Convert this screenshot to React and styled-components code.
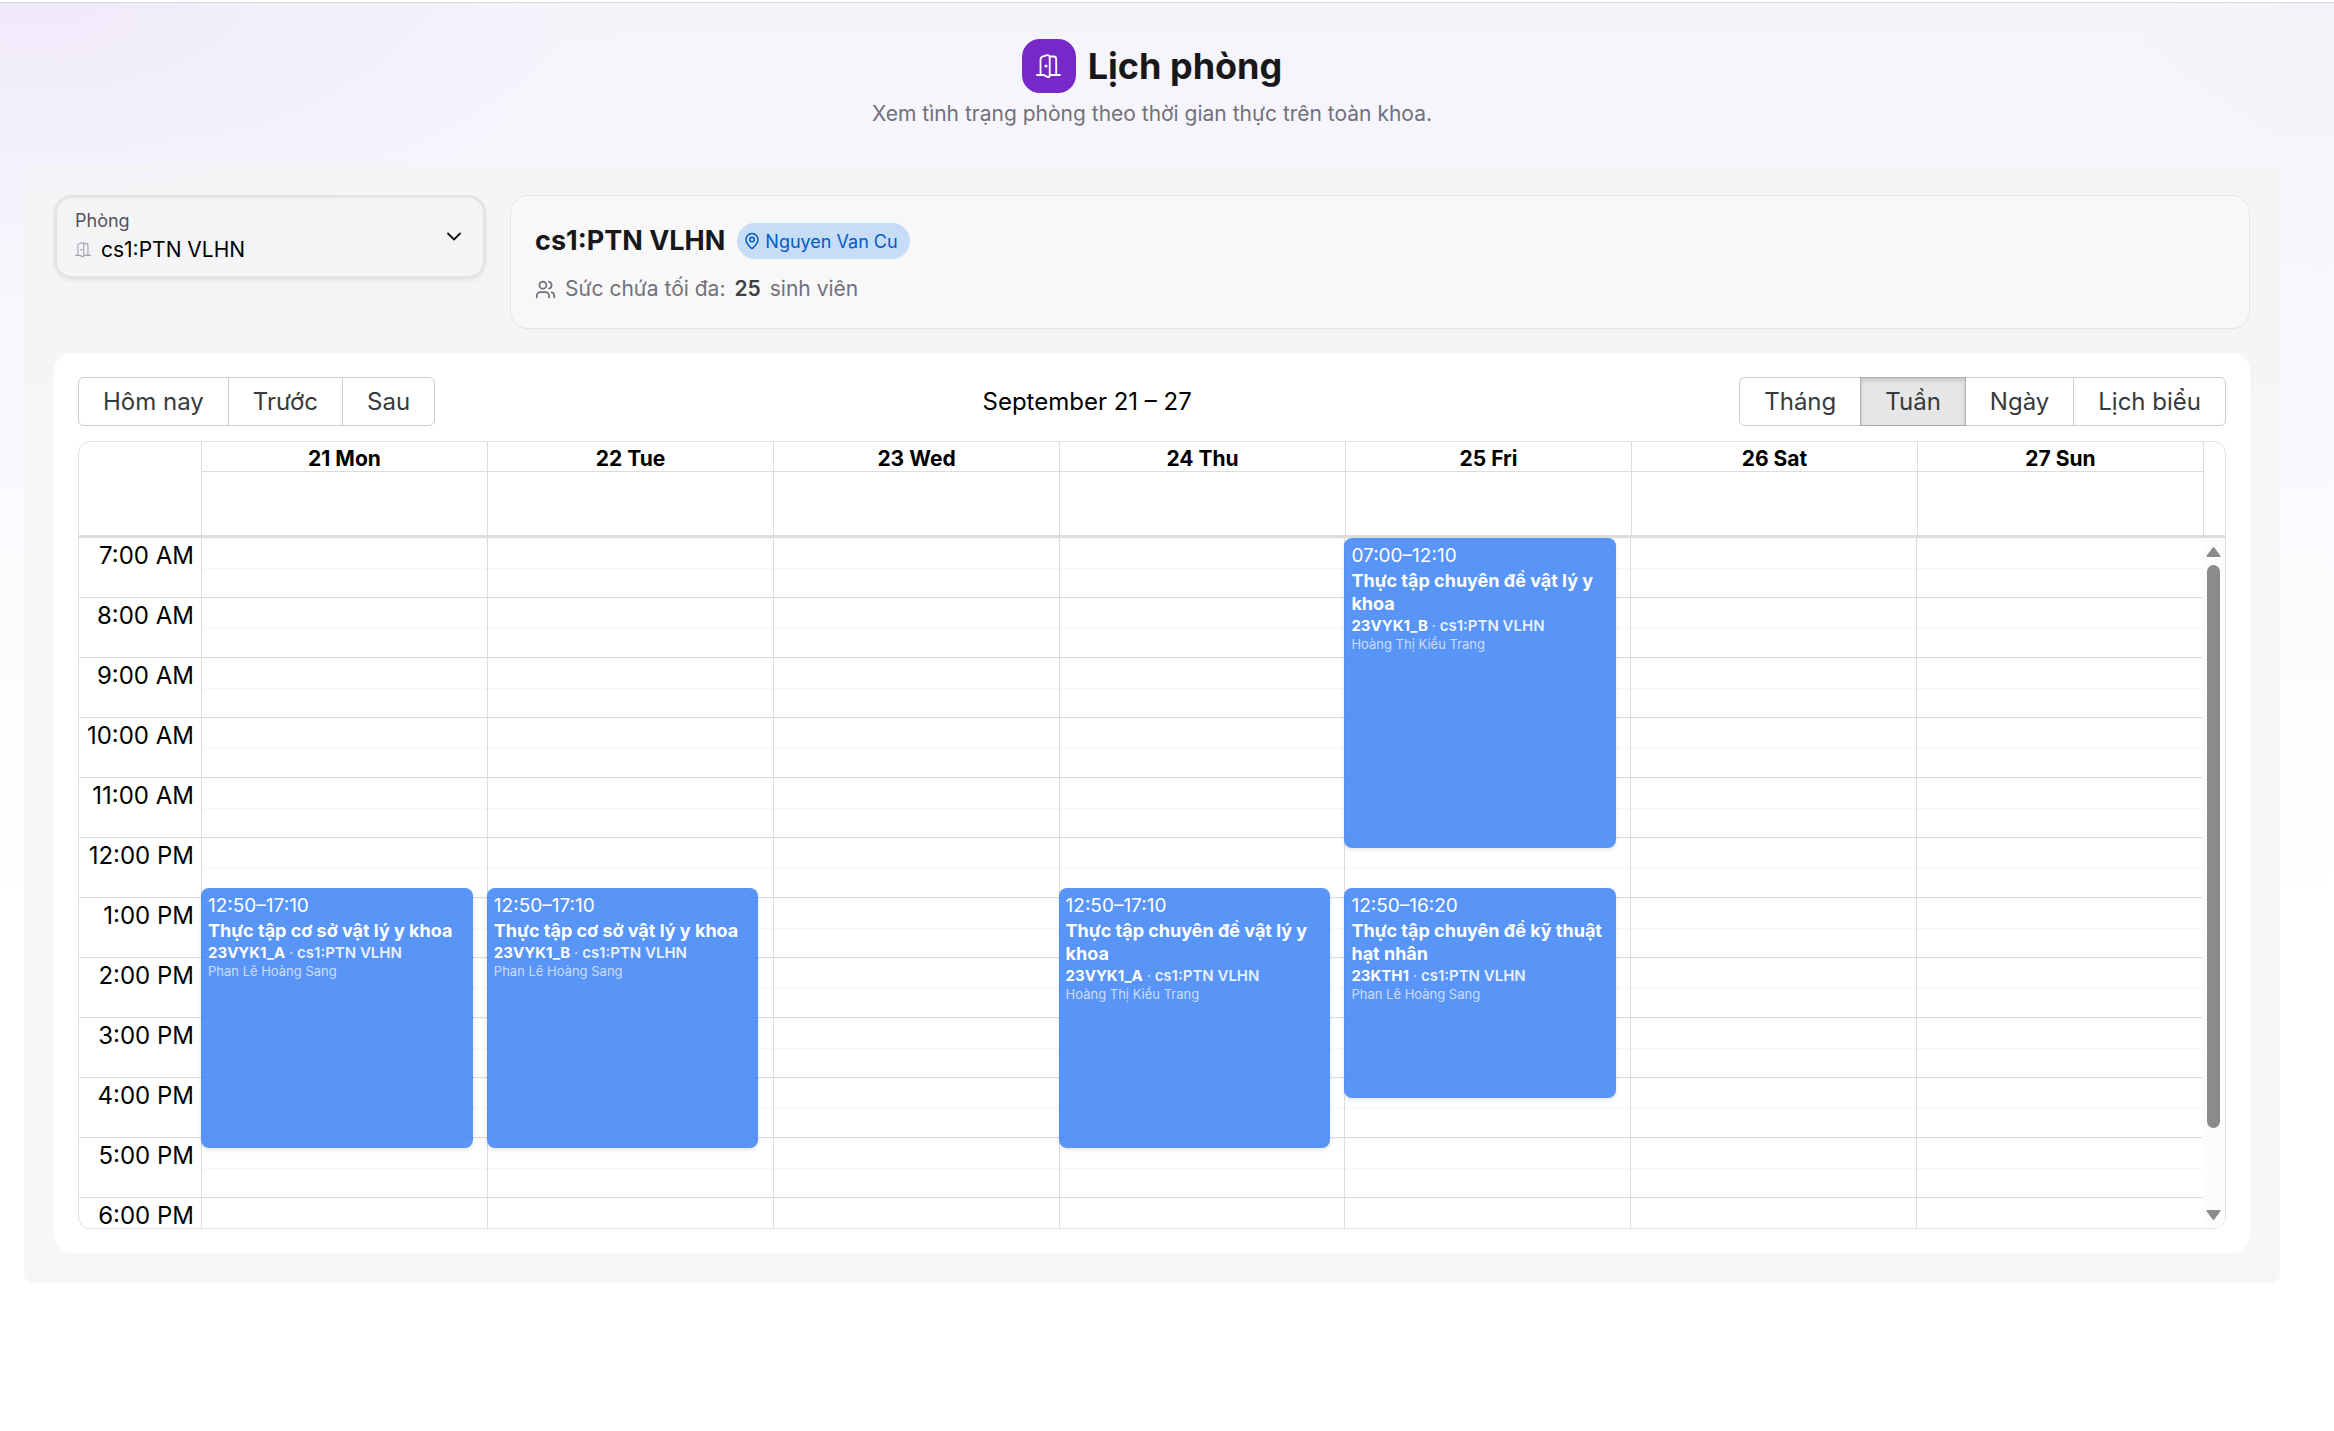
import React, { useState } from "react";
import styled, { createGlobalStyle, css } from "styled-components";
import { MapPin, Users } from "lucide-react";

const HOUR_HEIGHT = 60;
const FIRST_HOUR = 7;

const GlobalStyle = createGlobalStyle`
  *, *::before, *::after { box-sizing: border-box; }
  body {
    margin: 0;
    background: #fff;
    color: #000;
    font-family: Inter, "Noto Sans", sans-serif;
    font-size: 24px;
  }
  button, select { font: inherit; color: inherit; }
`;

const Page = styled.div`
  min-height: 100vh;
  padding: 2px 54px 48px 24px;
  background:
    linear-gradient(#fff 2px, #d9d7de 2px, #d9d7de 3px, transparent 3px),
    radial-gradient(ellipse 600px 320px at 40px 0, rgba(214, 190, 245, 0.2), rgba(214, 200, 248, 0.1) 50%, transparent),
    radial-gradient(ellipse 200px 300px at 100% 0, rgba(225, 230, 240, 0.16), transparent),
    linear-gradient(#f6f4fb 0, #f8f6fd 200px, #fafafe 480px, #fff 900px);
`;

const Header = styled.header`
  display: flex;
  flex-direction: column;
  align-items: center;
  gap: 6px;
  padding: 37px 0 36px;
`;

const HeaderRow = styled.div`
  display: flex;
  align-items: center;
  gap: 12px;
`;

const IconTile = styled.span`
  display: flex;
  align-items: center;
  justify-content: center;
  width: 54px;
  height: 54px;
  border-radius: 18px;
  background: #7828c8;
  color: #fff;
`;

const PageTitle = styled.h1`
  margin: 0;
  font-size: 36px;
  line-height: 54px;
  font-weight: 700;
  color: #18181b;
`;

const Subtitle = styled.p`
  margin: 0;
  font-size: 21px;
  line-height: 30px;
  color: #71717a;
`;

const Panel = styled.main`
  display: flex;
  flex-direction: column;
  gap: 24px;
  padding: 30px;
  border-radius: 9px;
  background: rgba(244, 244, 244, 0.7);
`;

const TopRow = styled.div`
  display: grid;
  grid-template-columns: 432px 1fr;
  gap: 24px;
  align-items: start;
`;

const Field = styled.div`
  display: flex;
  align-items: center;
  height: 84px;
  padding: 0 21px 0 18px;
  border: 3px solid #e4e4e7;
  border-radius: 18px;
  box-shadow: 0 2px 4px rgba(0, 0, 0, 0.06);
`;

const FieldBody = styled.div`
  flex: 1;
  display: flex;
  flex-direction: column;
  gap: 2px;
`;

const FieldLabel = styled.label`
  font-size: 18px;
  line-height: 24px;
  color: #52525b;
`;

const FieldValue = styled.div`
  display: flex;
  align-items: center;
  gap: 10px;
  color: #a1a1aa;
`;

const RoomSelect = styled.select`
  flex: 1;
  height: 30px;
  padding: 0;
  border: 0;
  outline: 0;
  appearance: none;
  background: transparent;
  font-size: 21px;
  line-height: 30px;
  color: #000;
`;

const RoomCard = styled.section`
  display: flex;
  flex-direction: column;
  gap: 15px;
  padding: 27px 24px 24px;
  border: 1px solid #e4e4e7;
  border-radius: 18px;
  background: #f8f8f8;
`;

const RoomHeading = styled.div`
  display: flex;
  align-items: center;
  gap: 12px;
`;

const RoomName = styled.h2`
  margin: 0;
  font-size: 27px;
  line-height: 36px;
  font-weight: 700;
  color: #18181b;
`;

const Badge = styled.span`
  display: flex;
  align-items: center;
  gap: 4px;
  height: 36px;
  padding: 0 12px 0 6px;
  border-radius: 18px;
  background: #c7dcf7;
  color: #005bc4;
  font-size: 18px;
`;

const Capacity = styled.p`
  display: flex;
  align-items: center;
  gap: 9px;
  margin: 0;
  font-size: 21px;
  line-height: 30px;
  color: #71717a;

  strong {
    font-weight: 600;
    color: #3f3f46;
  }
`;

const CalendarCard = styled.section`
  padding: 24px;
  border-radius: 18px;
  background: #fff;
`;

const Toolbar = styled.div`
  display: flex;
  align-items: center;
  margin-bottom: 15px;
`;

const ToolbarLabel = styled.span`
  flex: 1;
  text-align: center;
`;

const ButtonGroup = styled.div`
  display: flex;
`;

const ToolButton = styled.button`
  height: 49px;
  padding: 0 24px;
  border: 1px solid #ccc;
  background: #fff;
  color: #373a3c;
  line-height: 30px;
  cursor: pointer;

  & + & { margin-left: -1px; }
  &:first-child { border-radius: 6px 0 0 6px; }
  &:last-child { border-radius: 0 6px 6px 0; }

  ${(p) =>
    p.$active &&
    css`
      position: relative;
      border-color: #adadad;
      background: #e6e6e6;
      box-shadow: inset 0 3px 5px rgba(0, 0, 0, 0.125);
    `}
`;

const TimeView = styled.div`
  overflow: hidden;
  border: 1px solid #e2e2e5;
  border-radius: 12px;
`;

const HeadRow = styled.div`
  display: grid;
  grid-template-columns: 122px repeat(7, 1fr) 22px;
  border-bottom: 3px solid #ddd;
`;

const HeadSpacer = styled.div`
  border-left: ${(p) => (p.$line ? "1px solid #ddd" : "0")};
`;

const DayHead = styled.div`
  height: 93px;
  border-left: 1px solid #ddd;
`;

const DayName = styled.div`
  height: 30px;
  border-bottom: 1px solid #ddd;
  text-align: center;
  font-size: 21px;
  line-height: 34px;
  font-weight: 700;
`;

const TimeContent = styled.div`
  display: grid;
  grid-template-columns: 122px repeat(7, 1fr) 23px;
  grid-template-rows: 100%;
  height: 690px;
  overflow: hidden;
`;

const GutterHour = styled.div`
  height: ${HOUR_HEIGHT}px;
  padding: 6px 7px 0 0;
  border-bottom: 1px solid #ddd;
  text-align: right;
  line-height: 24px;
  white-space: nowrap;
`;

const DayColumn = styled.div`
  position: relative;
`;

const HourSlot = styled.div`
  display: grid;
  grid-template-rows: 1fr 1fr;
  height: ${HOUR_HEIGHT}px;
  border-left: 1px solid #ddd;
  border-bottom: 1px solid #ddd;
`;

const HalfSlot = styled.div`
  border-top: 1px solid #f7f7f7;
`;

const EventBox = styled.article`
  position: absolute;
  left: 0;
  width: 95%;
  top: ${(p) => p.$top}px;
  height: ${(p) => p.$height}px;
  padding: 5px 7px;
  overflow: hidden;
  border-radius: 8px;
  background: rgba(59, 130, 246, 0.85);
  box-shadow: 0 2px 4px rgba(0, 0, 0, 0.1);
  color: #fff;
`;

const EventTime = styled.div`
  font-size: 19px;
  line-height: 26px;
`;

const EventTitle = styled.div`
  font-size: 18px;
  line-height: 23px;
  font-weight: 700;
`;

const EventMeta = styled.div`
  margin-top: 1px;
  font-size: 15px;
  line-height: 20px;
  font-weight: 600;
  color: rgba(255, 255, 255, 0.88);

  b {
    font-weight: 700;
    color: #fff;
  }

  i {
    font-style: normal;
    font-weight: 400;
    opacity: 0.8;
  }
`;

const EventTeacher = styled.div`
  font-size: 13px;
  line-height: 16px;
  color: rgba(255, 255, 255, 0.7);
`;

const ScrollTrack = styled.div`
  display: grid;
  grid-template-rows: 27px 563fr 73fr 27px;
  justify-items: center;
  background: #fcfcfc;
  color: #8b8b8b;
`;

const ScrollThumb = styled.div`
  width: 13px;
  border-radius: 7px;
  background: #8b8b8b;
`;

const ScrollArrow = styled.svg`
  grid-row: ${(p) => (p.$down ? 4 : 1)};
  align-self: center;
  width: 15px;
  height: 12px;
  transform: ${(p) => (p.$down ? "rotate(180deg)" : "none")};
`;

function DoorIcon({ size, strokeWidth = 1.8 }) {
  return (
    <svg
      width={size}
      height={size}
      viewBox="0 0 25 25"
      fill="none"
      stroke="currentColor"
      strokeWidth={strokeWidth}
      strokeLinecap="round"
      strokeLinejoin="round"
      aria-hidden="true"
    >
      <path d="M1 21h7l3.3 1.9c1.6.5 2.4 0 2.4-1.6V3.5c0-2-1.2-2.7-3.2-2.1L7 2.4C5.2 3 4.500 3.8 4.500 5.500V21" />
      <path d="M13.700 2.500h4c1.700 0 2.500.8 2.500 2.500v16" />
      <path d="M14 21h10" />
      <circle cx="10" cy="12" r="0.700" fill="currentColor" />
    </svg>
  );
}

function ChevronIcon() {
  return (
    <svg width="16" height="10" viewBox="0 0 16 10" fill="none" stroke="#111" strokeWidth="1.8" strokeLinecap="round" strokeLinejoin="round" aria-hidden="true">
      <path d="M2 1.500L8 7.500L14 1.500" />
    </svg>
  );
}

function Arrow({ down }) {
  return (
    <ScrollArrow $down={down} viewBox="0 0 15 12" aria-hidden="true">
      <path d="M7.500 2L13.500 10H1.500Z" fill="currentColor" stroke="currentColor" strokeWidth="2" strokeLinejoin="round" />
    </ScrollArrow>
  );
}

const DAYS = ["21 Mon", "22 Tue", "23 Wed", "24 Thu", "25 Fri", "26 Sat", "27 Sun"];
const HOURS = [7, 8, 9, 10, 11, 12, 13, 14, 15, 16, 17, 18];
const VIEWS = ["Tháng", "Tuần", "Ngày", "Lịch biểu"];
const ROOM = "cs1:PTN VLHN";

const EVENTS = [
  { day: 0, from: "12:50", to: "17:10", title: "Thực tập cơ sở vật lý y khoa", code: "23VYK1_A", teacher: "Phan Lê Hoàng Sang" },
  { day: 1, from: "12:50", to: "17:10", title: "Thực tập cơ sở vật lý y khoa", code: "23VYK1_B", teacher: "Phan Lê Hoàng Sang" },
  { day: 3, from: "12:50", to: "17:10", title: "Thực tập chuyên đề vật lý y khoa", code: "23VYK1_A", teacher: "Hoàng Thị Kiều Trang" },
  { day: 4, from: "07:00", to: "12:10", title: "Thực tập chuyên đề vật lý y khoa", code: "23VYK1_B", teacher: "Hoàng Thị Kiều Trang" },
  { day: 4, from: "12:50", to: "16:20", title: "Thực tập chuyên đề kỹ thuật hạt nhân", code: "23KTH1", teacher: "Phan Lê Hoàng Sang" },
];

const offsetOf = (time) => {
  const [h, m] = time.split(":").map(Number);
  return ((h - FIRST_HOUR) * 60 + m) * (HOUR_HEIGHT / 60);
};

const hourLabel = (h) => `${h > 12 ? h - 12 : h}:00 ${h >= 12 ? "PM" : "AM"}`;

function CalendarEvent({ event }) {
  const top = offsetOf(event.from);
  return (
    <EventBox $top={top} $height={offsetOf(event.to) - top}>
      <EventTime>{event.from}–{event.to}</EventTime>
      <EventTitle>{event.title}</EventTitle>
      <EventMeta>
        <b>{event.code}</b> <i>·</i> {ROOM}
      </EventMeta>
      <EventTeacher>{event.teacher}</EventTeacher>
    </EventBox>
  );
}

export default function App() {
  const [view, setView] = useState("Tuần");

  return (
    <Page>
      <GlobalStyle />
      <Header>
        <HeaderRow>
          <IconTile>
            <DoorIcon size={25} />
          </IconTile>
          <PageTitle>Lịch phòng</PageTitle>
        </HeaderRow>
        <Subtitle>Xem tình trạng phòng theo thời gian thực trên toàn khoa.</Subtitle>
      </Header>

      <Panel>
        <TopRow>
          <Field>
            <FieldBody>
              <FieldLabel htmlFor="room">Phòng</FieldLabel>
              <FieldValue>
                <DoorIcon size={16} />
                <RoomSelect id="room" defaultValue={ROOM}>
                  <option>{ROOM}</option>
                </RoomSelect>
              </FieldValue>
            </FieldBody>
            <ChevronIcon />
          </Field>

          <RoomCard>
            <RoomHeading>
              <RoomName>{ROOM}</RoomName>
              <Badge>
                <MapPin size={18} strokeWidth={2} />
                Nguyen Van Cu
              </Badge>
            </RoomHeading>
            <Capacity>
              <Users size={21} strokeWidth={2} />
              <span>Sức chứa tối đa:</span>
              <strong>25</strong>
              <span>sinh viên</span>
            </Capacity>
          </RoomCard>
        </TopRow>

        <CalendarCard>
          <Toolbar>
            <ButtonGroup>
              <ToolButton type="button">Hôm nay</ToolButton>
              <ToolButton type="button">Trước</ToolButton>
              <ToolButton type="button">Sau</ToolButton>
            </ButtonGroup>
            <ToolbarLabel>September 21 – 27</ToolbarLabel>
            <ButtonGroup>
              {VIEWS.map((name) => (
                <ToolButton key={name} type="button" $active={name === view} onClick={() => setView(name)}>
                  {name}
                </ToolButton>
              ))}
            </ButtonGroup>
          </Toolbar>

          <TimeView>
            <HeadRow>
              <HeadSpacer />
              {DAYS.map((day) => (
                <DayHead key={day}>
                  <DayName>{day}</DayName>
                </DayHead>
              ))}
              <HeadSpacer $line />
            </HeadRow>
            <TimeContent>
              <div>
                {HOURS.map((h) => (
                  <GutterHour key={h}>{hourLabel(h)}</GutterHour>
                ))}
              </div>
              {DAYS.map((day, index) => (
                <DayColumn key={day}>
                  {HOURS.map((h) => (
                    <HourSlot key={h}>
                      <HalfSlot />
                      <HalfSlot />
                    </HourSlot>
                  ))}
                  {EVENTS.filter((e) => e.day === index).map((e) => (
                    <CalendarEvent key={e.from} event={e} />
                  ))}
                </DayColumn>
              ))}
              <ScrollTrack>
                <Arrow />
                <ScrollThumb />
                <Arrow down />
              </ScrollTrack>
            </TimeContent>
          </TimeView>
        </CalendarCard>
      </Panel>
    </Page>
  );
}
